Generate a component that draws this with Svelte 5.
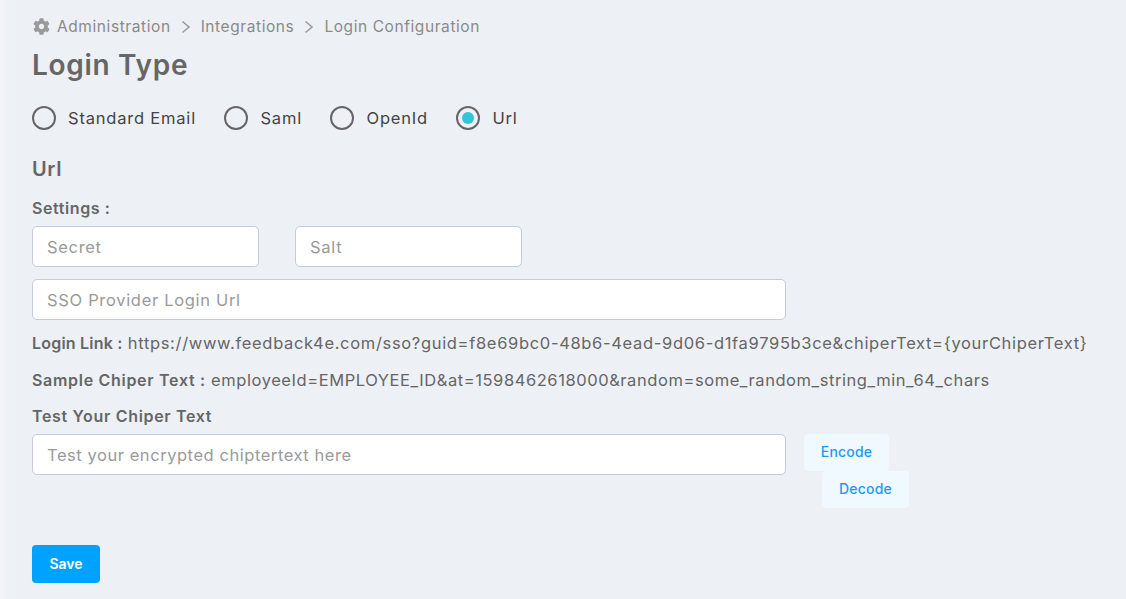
<script>
	let types = ['Standard Email', 'Saml', 'OpenId', 'Url'];
	let selected = $state('Url');
</script>

<div class="page">
	<nav class="crumbs">
		<svg class="gear" viewBox="0 0 512 512" width="17" height="17">
			<path fill="#9a9a9a" d="M487.4 315.7l-42.6-24.6c4.3-23.2 4.3-47 0-70.2l42.6-24.6c4.9-2.8 7.1-8.6 5.5-14-11.1-35.6-30-67.8-54.7-94.6-3.8-4.1-10-5.1-14.8-2.3L380.8 110c-17.9-15.4-38.5-27.3-60.8-35.1V25.8c0-5.6-3.9-10.5-9.4-11.7-36.7-8.2-74.3-7.8-109.2 0-5.5 1.2-9.4 6.1-9.4 11.7V75c-22.2 7.9-42.8 19.8-60.8 35.1L88.7 85.5c-4.9-2.8-11-1.9-14.8 2.3-24.7 26.7-43.6 58.9-54.7 94.6-1.7 5.4.6 11.2 5.5 14L67.3 221c-4.3 23.2-4.3 47 0 70.2l-42.6 24.6c-4.9 2.8-7.1 8.6-5.5 14 11.1 35.6 30 67.8 54.7 94.6 3.8 4.1 10 5.1 14.8 2.3l42.6-24.6c17.9 15.4 38.5 27.3 60.8 35.1v49.2c0 5.6 3.9 10.5 9.4 11.7 36.7 8.2 74.3 7.8 109.2 0 5.5-1.2 9.4-6.1 9.4-11.7v-49.2c22.2-7.9 42.8-19.8 60.8-35.1l42.6 24.6c4.9 2.8 11 1.9 14.8-2.3 24.7-26.7 43.6-58.9 54.7-94.6 1.5-5.5-.7-11.3-5.6-14.1zM256 336c-44.1 0-80-35.9-80-80s35.9-80 80-80 80 35.9 80 80-35.9 80-80 80z"/>
		</svg>
		<span>Administration</span>
		<svg class="chev" viewBox="0 0 10 14" width="10" height="14"><path d="M1.5 1.5l6.5 5.5-6.500 5.500" fill="none" stroke="#9a9a9a" stroke-width="1.6"/></svg>
		<span>Integrations</span>
		<svg class="chev" viewBox="0 0 10 14" width="10" height="14"><path d="M1.5 1.5l6.5 5.5-6.500 5.500" fill="none" stroke="#9a9a9a" stroke-width="1.6"/></svg>
		<span>Login Configuration</span>
	</nav>

	<h1>Login Type</h1>

	<div class="radios">
		{#each types as t}
			<label class="radio">
				<input type="radio" name="type" value={t} bind:group={selected} />
				<span class="ring"></span>
				<span class="radio-text">{t}</span>
			</label>
		{/each}
	</div>

	<h2>Url</h2>
	<div class="settings">Settings :</div>

	<div class="pair">
		<input class="field short" placeholder="Secret" />
		<input class="field short" placeholder="Salt" />
	</div>
	<input class="field wide" placeholder="SSO Provider Login Url" />

	<p class="line first"><b>Login Link :</b> https://www.feedback4e.com/sso?guid=f8e69bc0-48b6-4ead-9d06-d1fa9795b3ce&amp;chiperText={'{'}yourChiperText{'}'}</p>
	<p class="line second"><b>Sample Chiper Text :</b> employeeId=EMPLOYEE_ID&amp;at=1598462618000&amp;random=some_random_string_min_64_chars</p>

	<div class="test-label">Test Your Chiper Text</div>
	<div class="test-row">
		<input class="field wide test" placeholder="Test your encrypted chiptertext here" />
		<div class="test-actions">
			<button class="soft encode">Encode</button>
			<button class="soft decode">Decode</button>
		</div>
	</div>

	<button class="save">Save</button>
</div>

<style>
	:global(body) {
		background: #edf0f5;
	}

	.page {
		box-sizing: border-box;
		height: 599px;
		padding: 17px 32px 0;
		font-family: Inter, "Open Sans", sans-serif;
		font-size: 15.5px;
		color: #666;
		background: linear-gradient(90deg, #f2f4f9 0, #edf0f5 10px);
		overflow: hidden;
	}

	.crumbs {
		display: flex;
		align-items: center;
		height: 19px;
		color: #8a8a8a;
		letter-spacing: 0.58px;
	}

	.gear {
		margin: 0 7px 0 1px;
	}

	.chev {
		margin: 0 10px;
	}

	h1 {
		margin: 9px 0 0;
		font-size: 28px;
		line-height: 40px;
		font-weight: 600;
		letter-spacing: 0.7px;
		color: #666;
	}

	.radios {
		display: flex;
		gap: 28.5px;
		margin-top: 21px;
		height: 24px;
	}

	.radio {
		display: flex;
		align-items: center;
		gap: 12px;
		font-size: 16.5px;
		color: #444;
		letter-spacing: 0.8px;
	}

	.radio input {
		display: none;
	}

	.ring {
		box-sizing: border-box;
		width: 24px;
		height: 24px;
		border: 2px solid #666;
		border-radius: 50%;
		display: flex;
		align-items: center;
		justify-content: center;
	}

	.radio input:checked + .ring::after {
		content: '';
		width: 12px;
		height: 12px;
		border-radius: 50%;
		background: #33c5d5;
	}

	h2 {
		margin: 25px 0 0;
		font-size: 20px;
		line-height: 28px;
		font-weight: 600;
		letter-spacing: 0.6px;
	}

	.settings {
		margin-top: 13px;
		font-size: 16px;
		line-height: 24px;
		font-weight: 600;
		letter-spacing: 0.6px;
	}

	.pair {
		display: flex;
		gap: 36px;
		margin-top: 6px;
	}

	.field {
		display: block;
		box-sizing: border-box;
		height: 41px;
		padding: 0 14px;
		background: #fff;
		border: 1px solid #c3cbdc;
		border-radius: 5px;
		font: inherit;
		font-size: 16.5px;
		letter-spacing: 0.68px;
		outline: none;
	}

	.test {
		letter-spacing: 0.55px;
	}

	.field::placeholder {
		color: #9a9a9a;
	}

	.short {
		width: 227px;
	}

	.wide {
		width: 754px;
		flex: none;
	}

	.pair + .wide {
		margin-top: 12px;
	}

	.line {
		margin: 0;
		font-size: 16.5px;
		line-height: 24px;
		white-space: nowrap;
	}

	.line b {
		font-size: 16px;
		font-weight: 600;
	}

	.first {
		margin-top: 11px;
		letter-spacing: 0.67px;
	}

	.first b {
		letter-spacing: 0.2px;
	}

	.second {
		margin-top: 13px;
		letter-spacing: 0.57px;
	}

	.second b {
		letter-spacing: 0.7px;
	}

	.test-label {
		margin-top: 12px;
		font-size: 16px;
		line-height: 24px;
		font-weight: 600;
		letter-spacing: 0.67px;
	}

	.test-row {
		display: flex;
		margin-top: 6px;
	}

	.test-actions {
		display: flex;
		flex-direction: column;
		align-items: flex-start;
		margin-left: 18px;
	}

	.soft {
		height: 37px;
		padding: 0 0 2px;
		border: 0;
		border-radius: 4px;
		background: #f0f9ff;
		color: #1a9bf5;
		font: inherit;
		font-size: 14px;
		font-weight: 500;
		letter-spacing: 0.2px;
	}

	.encode {
		width: 85px;
	}

	.decode {
		width: 87px;
		margin-left: 18px;
	}

	.save {
		display: block;
		width: 68px;
		height: 38px;
		margin-top: 37px;
		padding: 0 0 2px;
		border: 0;
		border-radius: 4px;
		background: #00a2ff;
		color: #fff;
		font: inherit;
		font-size: 14px;
		font-weight: 600;
	}
</style>
